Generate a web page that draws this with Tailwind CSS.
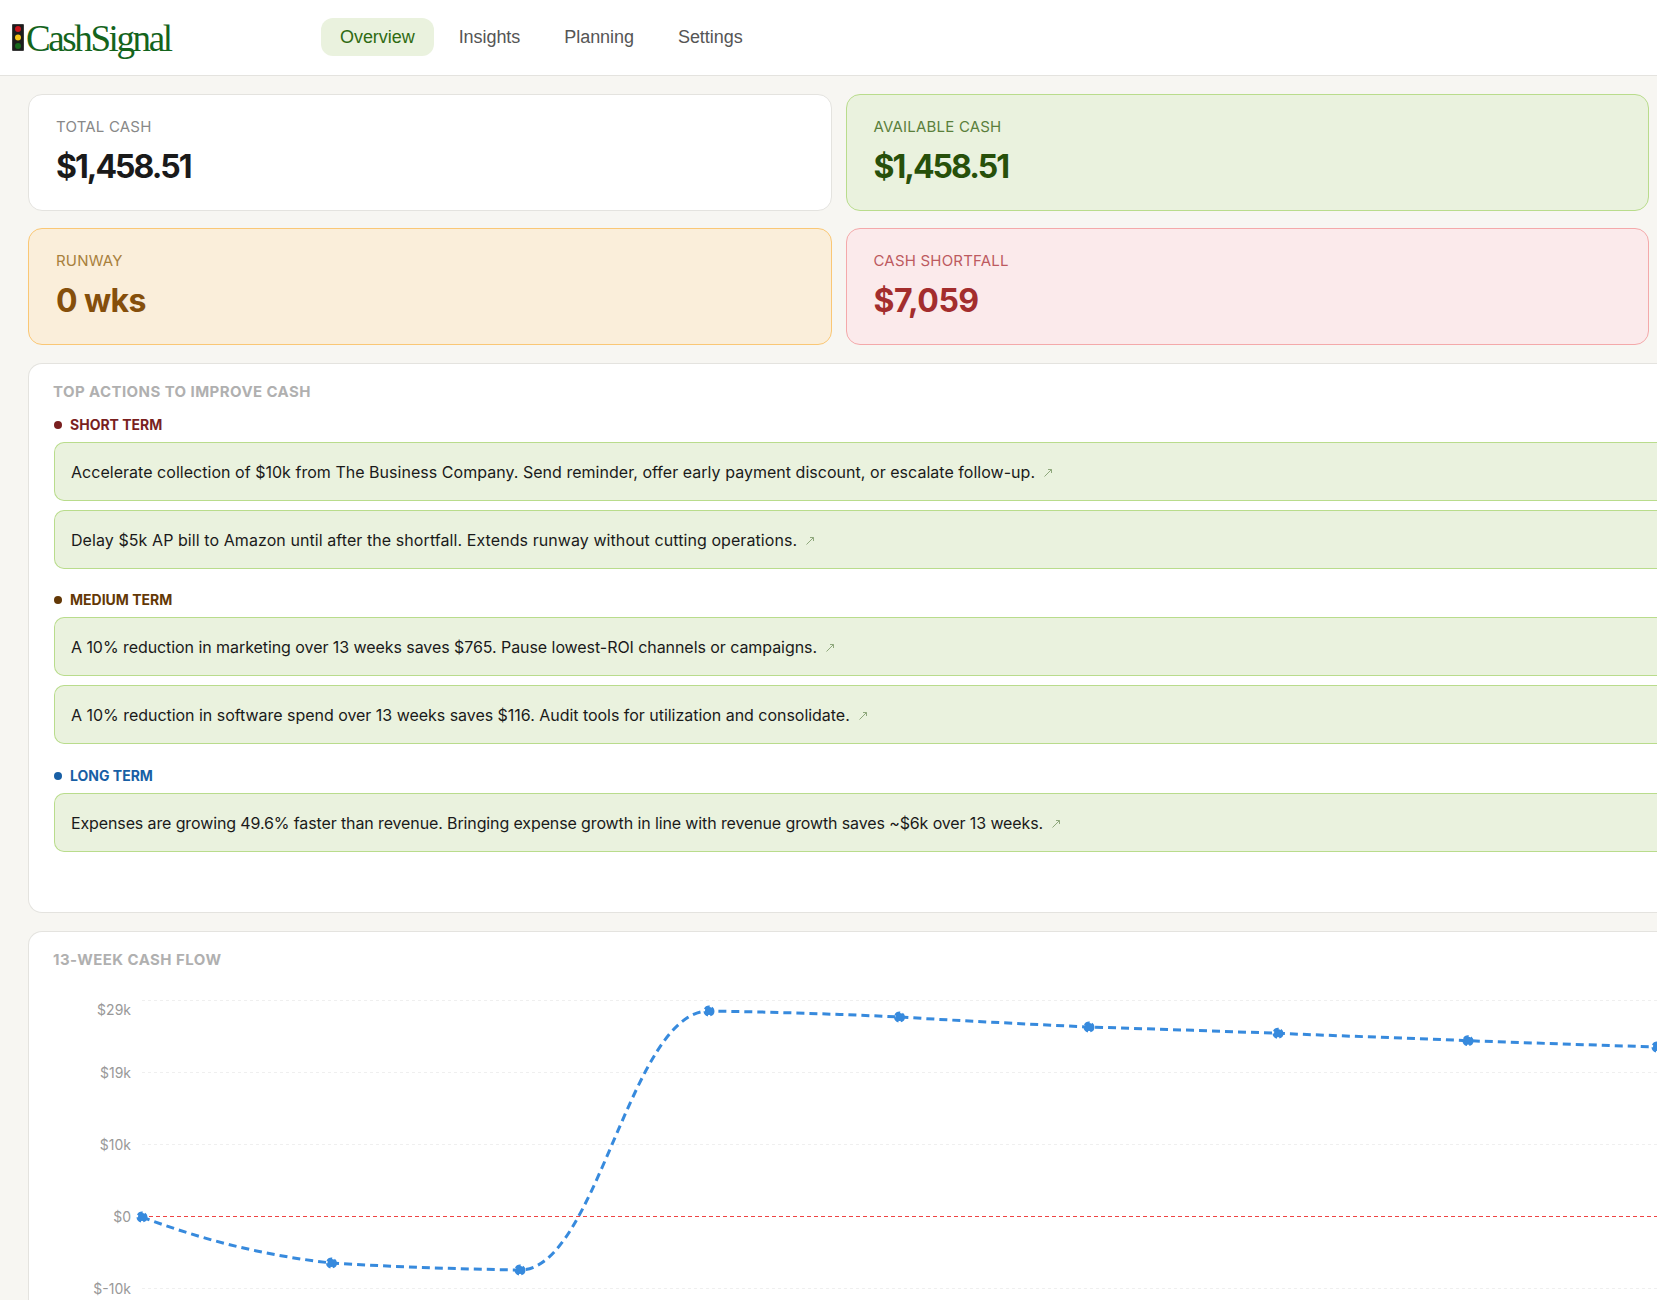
<!DOCTYPE html>
<html lang="en">

<head>
  <meta charset="UTF-8">
  <title>CashSignal</title>
  <script src="https://cdn.jsdelivr.net/npm/@tailwindcss/browser@4"></script>
</head>

<body class="bg-[#f7f6f2] overflow-hidden w-[1657px] h-[1300px] font-['Inter',sans-serif] text-[#1a1a1a]">
  <header class="h-[76px] bg-white border-b border-[#e4e3df] flex items-center">
    <div class="w-[321px] pl-3 pt-[2px] flex items-center gap-[2px]">
      <svg class="-mt-[3px]" width="12" height="27" viewBox="0 0 12 27">
        <rect x="0" y="0" width="12" height="27" rx="1" fill="#1c1c1c" stroke="#999" stroke-width="0.5" />
        <circle cx="6" cy="5" r="3" fill="#c8141c" />
        <circle cx="6" cy="13.5" r="3" fill="#f5c518" />
        <circle cx="6" cy="22" r="3" fill="#176a1c" />
      </svg>
      <span class="font-['Liberation_Serif',serif] text-[37px] leading-none tracking-[-2.4px] text-[#14641c]">CashSignal</span>
    </div>
    <nav class="flex items-center gap-[6px] font-['Liberation_Sans',sans-serif] text-[18px] tracking-[-0.05px] text-[#555] -mt-[2px]">
      <a class="h-[38px] px-[19px] pt-[2px] flex items-center rounded-xl bg-[#eaf2de] text-[#2f6b12]">Overview</a>
      <a class="h-[38px] px-[19px] pt-[2px] flex items-center rounded-xl">Insights</a>
      <a class="h-[38px] px-[19px] pt-[2px] flex items-center rounded-xl">Planning</a>
      <a class="h-[38px] px-[19px] pt-[2px] flex items-center rounded-xl">Settings</a>
    </nav>
  </header>

  <main class="pl-[28px] pt-[18px]">
    <div class="w-[1621px] grid grid-cols-2 gap-x-[14px] gap-y-[17px]">
      <div class="h-[117px] rounded-[14px] border border-[#e4e3df] bg-white pl-[27px] pt-[22px]">
        <div class="text-[15px] leading-5 tracking-[0.2px] text-[#888]">TOTAL CASH</div>
        <div class="text-[32px] leading-10 mt-[10px] font-bold tracking-[-2px] text-[#1a1a1a]">$1,458.51</div>
      </div>
      <div class="h-[117px] rounded-[14px] border border-[#b9dc8c] bg-[#eaf2de] pl-[27px] pt-[22px]">
        <div class="text-[15px] leading-5 tracking-[0.2px] text-[#5a7f3c]">AVAILABLE CASH</div>
        <div class="text-[32px] leading-10 mt-[10px] font-bold tracking-[-2px] text-[#27500a]">$1,458.51</div>
      </div>
      <div class="h-[117px] rounded-[14px] border border-[#fac775] bg-[#faeeda] pl-[27px] pt-[22px]">
        <div class="text-[15px] leading-5 tracking-[0.2px] text-[#a8803c]">RUNWAY</div>
        <div class="text-[32px] leading-10 mt-[10px] font-bold tracking-[-0.6px] text-[#854f0b]">0 wks</div>
      </div>
      <div class="h-[117px] rounded-[14px] border border-[#f4a9aa] bg-[#fbeaeb] pl-[27px] pt-[22px]">
        <div class="text-[15px] leading-5 tracking-[0.2px] text-[#bd5a5f]">CASH SHORTFALL</div>
        <div class="text-[32px] leading-10 mt-[10px] font-bold tracking-[-0.5px] text-[#a32d2d]">$7,059</div>
      </div>
    </div>

    <section class="h-[550px] mt-[18px] rounded-l-[14px] border border-r-0 border-[#e4e3df] bg-white pl-[25px] pt-[18px]">
      <h2 class="-ml-[1px] text-[15px] leading-5 font-bold tracking-[0.42px] text-[#b0b0b0]">TOP ACTIONS TO IMPROVE CASH</h2>

      <div class="mt-[15px] flex items-center gap-2 text-[14px] leading-4 font-bold text-[#791f1f]">
        <span class="w-2 h-2 rounded-full bg-[#791f1f]"></span>SHORT TERM
      </div>
      <div class="mt-[9px] flex flex-col gap-[9px] text-[16px]">
        <div class="h-[59px] rounded-l-[10px] border border-r-0 border-[#b9dc8c] bg-[#eaf2de] pl-[16px] flex items-center gap-[9px] tracking-[0.03px]">
          Accelerate collection of $10k from The Business Company. Send reminder, offer early payment discount, or escalate follow-up.
          <svg class="mt-[2px]" width="8" height="8" viewBox="0 0 8 8" fill="none" stroke="#8fa87c" stroke-width="1"><path d="M0.5 7.5 7.5 0.5M4 0.5H7.5V4" /></svg>
        </div>
        <div class="h-[59px] rounded-l-[10px] border border-r-0 border-[#b9dc8c] bg-[#eaf2de] pl-[16px] flex items-center gap-[9px] tracking-[0.075px]">
          Delay $5k AP bill to Amazon until after the shortfall. Extends runway without cutting operations.
          <svg class="mt-[2px]" width="8" height="8" viewBox="0 0 8 8" fill="none" stroke="#8fa87c" stroke-width="1"><path d="M0.5 7.5 7.5 0.5M4 0.5H7.5V4" /></svg>
        </div>
      </div>

      <div class="mt-[23px] flex items-center gap-2 text-[14px] leading-4 font-bold text-[#633806]">
        <span class="w-2 h-2 rounded-full bg-[#633806]"></span>MEDIUM TERM
      </div>
      <div class="mt-[9px] flex flex-col gap-[9px] text-[16px]">
        <div class="h-[59px] rounded-l-[10px] border border-r-0 border-[#b9dc8c] bg-[#eaf2de] pl-[16px] flex items-center gap-[9px] tracking-[-0.066px]">
          A 10% reduction in marketing over 13 weeks saves $765. Pause lowest-ROI channels or campaigns.
          <svg class="mt-[2px]" width="8" height="8" viewBox="0 0 8 8" fill="none" stroke="#8fa87c" stroke-width="1"><path d="M0.5 7.5 7.5 0.5M4 0.5H7.5V4" /></svg>
        </div>
        <div class="h-[59px] rounded-l-[10px] border border-r-0 border-[#b9dc8c] bg-[#eaf2de] pl-[16px] flex items-center gap-[9px] tracking-[-0.03px]">
          A 10% reduction in software spend over 13 weeks saves $116. Audit tools for utilization and consolidate.
          <svg class="mt-[2px]" width="8" height="8" viewBox="0 0 8 8" fill="none" stroke="#8fa87c" stroke-width="1"><path d="M0.5 7.5 7.5 0.5M4 0.5H7.5V4" /></svg>
        </div>
      </div>

      <div class="mt-[24px] flex items-center gap-2 text-[14px] leading-4 font-bold text-[#185fa5]">
        <span class="w-2 h-2 rounded-full bg-[#185fa5]"></span>LONG TERM
      </div>
      <div class="mt-[9px] text-[16px]">
        <div class="h-[59px] rounded-l-[10px] border border-r-0 border-[#b9dc8c] bg-[#eaf2de] pl-[16px] flex items-center gap-[9px] tracking-[-0.12px]">
          Expenses are growing 49.6% faster than revenue. Bringing expense growth in line with revenue growth saves ~$6k over 13 weeks.
          <svg class="mt-[2px]" width="8" height="8" viewBox="0 0 8 8" fill="none" stroke="#8fa87c" stroke-width="1"><path d="M0.5 7.5 7.5 0.5M4 0.5H7.5V4" /></svg>
        </div>
      </div>
    </section>

    <section class="h-[369px] mt-[18px] rounded-tl-[14px] border border-r-0 border-b-0 border-[#e4e3df] bg-white pl-[25px] pt-[18px] overflow-hidden">
      <h2 class="-ml-[1px] text-[15px] leading-5 font-bold tracking-[0.45px] text-[#b0b0b0]">13-WEEK CASH FLOW</h2>
      <!-- viewBox uses page coordinates so the points can be read straight off the screenshot -->
      <svg class="-ml-[26px] mt-[4px]" width="1629" height="326" viewBox="28 974 1629 326" font-family="Inter, sans-serif" font-size="14" fill="#999" text-anchor="end">
        <g stroke="#efefef" stroke-dasharray="3 3" stroke-width="1">
          <path d="M142 1000.5H1657" />
          <path d="M142 1072.5H1657" />
          <path d="M142 1144.5H1657" />
          <path d="M142 1288.5H1657" />
        </g>
        <path d="M142 1216.5H1657" stroke="#ef4444" stroke-dasharray="4 3" stroke-width="1.2" />
        <text x="131" y="1015">$29k</text>
        <text x="131" y="1078">$19k</text>
        <text x="131" y="1150">$10k</text>
        <text x="131" y="1222">$0</text>
        <text x="131" y="1294">$-10k</text>
        <path d="M142 1217C205 1241 268 1256 331.5 1263C395 1267 457 1269 520 1270C597 1270 630 1011 709 1011C772 1012 836 1014 899.5 1017C963 1021 1026 1024 1089 1027C1152 1029 1215 1031 1278 1033.3C1341 1036 1405 1038 1468 1040.7C1531 1043 1594 1045 1657 1047" fill="none" stroke="#378add" stroke-width="3" stroke-dasharray="8 5" />
        <g fill="#378add" stroke="#378add" stroke-width="3" stroke-dasharray="5 2">
          <circle cx="142" cy="1217" r="4" />
          <circle cx="331.5" cy="1263" r="4" />
          <circle cx="520" cy="1270" r="4" />
          <circle cx="709" cy="1011" r="4" />
          <circle cx="899.5" cy="1017" r="4" />
          <circle cx="1089" cy="1027" r="4" />
          <circle cx="1278" cy="1033.3" r="4" />
          <circle cx="1468" cy="1040.7" r="4" />
          <circle cx="1657" cy="1047" r="4" />
        </g>
      </svg>
    </section>
  </main>
</body>

</html>
